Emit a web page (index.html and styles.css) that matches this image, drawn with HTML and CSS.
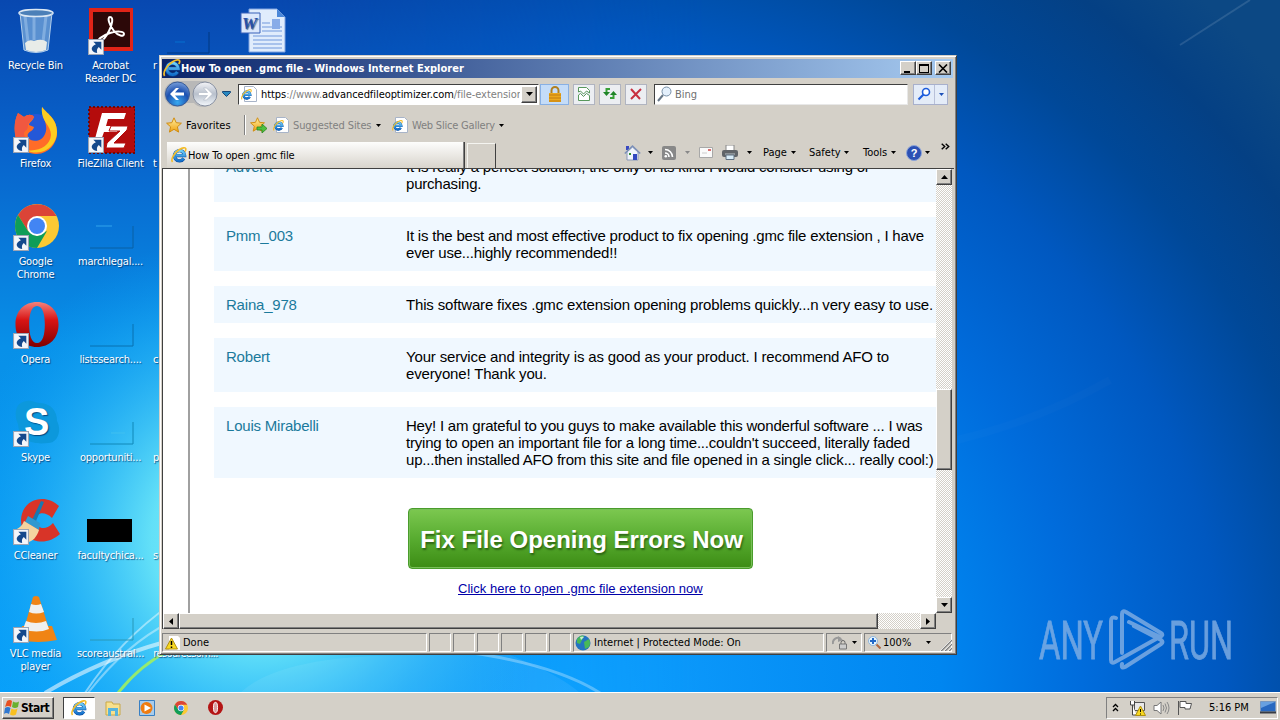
FILE: index.html
```html
<!DOCTYPE html>
<html lang="en">
<head>
  <meta charset="UTF-8">
  <meta name="viewport" content="width=device-width, initial-scale=1.0">
  <title>How To open .gmc file</title>
  <link rel="stylesheet" href="styles.css">
</head>
<body>

  <!-- shared icons -->
  <svg class="defs" width="0" height="0">
    <defs>
      <linearGradient id="ieBlue" x1="0" y1="0" x2="0" y2="1">
        <stop offset="0" stop-color="#70d0f8"/><stop offset="1" stop-color="#1470cc"/>
      </linearGradient>
      <linearGradient id="gold" x1="0" y1="0" x2="0" y2="1">
        <stop offset="0" stop-color="#fff0a0"/><stop offset="1" stop-color="#f0a010"/>
      </linearGradient>
      <linearGradient id="operaRed" x1="0" y1="0" x2="0" y2="1">
        <stop offset="0" stop-color="#f4827c"/><stop offset=".4" stop-color="#d81414"/><stop offset="1" stop-color="#800000"/>
      </linearGradient>
      <radialGradient id="navBlue" cx=".5" cy=".85" r=".8">
        <stop offset="0" stop-color="#38a8f0"/><stop offset=".6" stop-color="#1c50b0"/><stop offset="1" stop-color="#6c94d4"/>
      </radialGradient>
      <linearGradient id="navGray" x1="0" y1="0" x2="0" y2="1">
        <stop offset="0" stop-color="#f4f4f8"/><stop offset=".5" stop-color="#b8c0cc"/><stop offset="1" stop-color="#f4f8fc"/>
      </linearGradient>
    </defs>
    <symbol id="ie" viewBox="0 0 16 16">
      <path d="M12.800 11.500A5.100 5.100 0 1 1 13.600 8.600H5" fill="none" stroke="#0c4c9c" stroke-width="3.400"/>
      <path d="M12.800 11.500A5.100 5.100 0 1 1 13.600 8.600H5" fill="none" stroke="url(#ieBlue)" stroke-width="2.500"/>
      <path d="M1.500 15C-.5 12.500 3 5.800 8.500 2.500c3-1.800 6-2.300 6.300-.8.2 1-.3 2-.8 2.800" fill="none" stroke="#f4bc28" stroke-width="1.600"/>
    </symbol>
    <symbol id="iepage" viewBox="0 0 16 16">
      <path d="M3.500.5h9l3 3v12h-12z" fill="#fff" stroke="#a8b4c8"/>
      <use href="#ie" x="0" y="3" width="11" height="11"/>
    </symbol>
    <symbol id="star" viewBox="0 0 16 16">
      <path d="M8 .8l2.200 4.900 5.200.5-4 3.600 1.200 5.300L8 12.300l-4.600 2.800 1.200-5.300-4-3.600 5.200-.5z" fill="url(#gold)" stroke="#d08c10"/>
    </symbol>
    <symbol id="shortcut" viewBox="0 0 15 15">
      <path d="M.5.500h14v14H.5z" fill="#f4f6fa" stroke="#9ca4b4"/>
      <path d="M5 2.500h7.500V10l-2.400-2.400C8.500 9 8 10.500 8.600 13.200 2 12 2 7 7.400 4.900z" fill="#14488c"/>
    </symbol>
    <symbol id="chrome" viewBox="0 0 44 44">
      <circle cx="22" cy="22" r="22" fill="#fcc934"/>
      <path d="M3 11A22 22 0 0 1 41.500 12H22L13 27z" fill="#db4437"/>
      <path d="M3 11A22 22 0 0 0 22 44l10-17-10 5-9-5z" fill="#0f9d58"/>
      <circle cx="22" cy="22" r="10" fill="#fff"/><circle cx="22" cy="22" r="8" fill="#4285f4"/>
    </symbol>
    <symbol id="opera" viewBox="0 0 44 46">
      <path fill-rule="evenodd" d="M22 0C9 0 0 9 0 23s9 23 22 23 22-9 22-23S35 0 22 0zm0 4c6 0 8 9 8 19s-2 19-8 19-8-9-8-19 2-19 8-19z" fill="url(#operaRed)"/>
    </symbol>
    <symbol id="arrow" viewBox="0 0 5 3"><path d="M0 0h5L2.500 3z"/></symbol>
  </svg>

  <div class="desktop">
    <svg class="wallpaper" viewBox="0 0 1280 693" preserveAspectRatio="none">
      <defs>
        <linearGradient id="base" x1="0" y1="0" x2="0" y2="1">
          <stop offset="0" stop-color="#0848b0"/><stop offset=".22" stop-color="#0864cc"/><stop offset=".5" stop-color="#0890e8"/><stop offset="1" stop-color="#08a0fa"/>
        </linearGradient>
        <radialGradient id="glow" gradientUnits="userSpaceOnUse" cx="260" cy="540" r="310">
          <stop offset="0" stop-color="#98f8f8"/><stop offset=".35" stop-color="#68e4f8" stop-opacity=".95"/><stop offset=".68" stop-color="#30bcf8" stop-opacity=".55"/><stop offset="1" stop-color="#08a0f8" stop-opacity="0"/>
        </radialGradient>
        <radialGradient id="right" gradientUnits="userSpaceOnUse" cx="560" cy="700" r="950">
          <stop offset="0" stop-color="#10a0ff"/><stop offset=".4" stop-color="#0086f0"/><stop offset=".55" stop-color="#006cdc"/><stop offset=".7" stop-color="#0058c0"/><stop offset=".82" stop-color="#004898"/><stop offset=".92" stop-color="#044084"/><stop offset="1" stop-color="#0c4884"/>
        </radialGradient>
        <linearGradient id="fade" x1="0" y1="0" x2="1" y2="0">
          <stop offset=".2" stop-color="#000"/><stop offset=".55" stop-color="#fff"/>
        </linearGradient>
        <mask id="m"><rect width="1280" height="693" fill="url(#fade)"/></mask>
      </defs>
      <rect width="1280" height="693" fill="url(#base)"/>
      <rect width="1280" height="693" fill="url(#right)" mask="url(#m)"/>
      <rect width="1280" height="693" fill="url(#glow)"/>
      <g fill="none" stroke="#fff">
        <path d="M45 693Q100 660 165 642" stroke-width="4" opacity=".55"/>
        <path d="M85 693Q120 640 170 605" stroke-width="2" opacity=".45"/>
        <path d="M88 693Q125 645 170 622" stroke-width="2" opacity=".4"/>
        <path d="M118 693Q140 665 170 650" stroke="#a0f060" stroke-width="3" opacity=".9"/>
        <path d="M400 645Q540 655 600 693" stroke-width="3" opacity=".3"/>
        <path d="M1180 45L1250 0" stroke-width="2" opacity=".12"/>
        <path d="M957 440Q1040 420 1110 380" stroke-width="8" opacity=".015"/>
      </g>
      <path d="M240 693q40-38 170-38h100q50 20 70 38z" fill="#fff" opacity=".07"/>
    </svg>

    <div class="icons">
      <div class="icon"><svg viewBox="0 0 48 48">
        <path d="M8 4l4 38q12 5 24 0l4-38z" fill="#7cacdc" opacity=".7"/>
        <path d="M13 8l3 26M34 8l-3 26M22 8v24" stroke="#c8e4fc" stroke-width="3" opacity=".35"/>
        <path d="M13 35q4-4 9-2 8-3 13 1l-1 8q-10 4-20 0z" fill="#e8ece8"/>
        <ellipse cx="24" cy="5" rx="17" ry="3.500" fill="#4c80b8" stroke="#dce8f4" stroke-width="1.500"/>
        <path d="M8 5l4 37q12 5 24 0l4-37" fill="none" stroke="#b4d0ec"/>
      </svg><span>Recycle Bin</span></div>
      <div class="icon"><svg viewBox="0 0 48 48">
        <path d="M2 0h44v43H2z" fill="#e02418"/><path d="M6 4h37v35H6z" fill="#2c0808"/>
        <path d="M23 9c4 0 2 8-1 14s-6 10-9 10c-4 0 1-5 10-8 7-2 14-2 14 1s-6 2-10-3c-5-6-7-14-4-14z" fill="none" stroke="#fff" stroke-width="2"/>
        <use href="#shortcut" x="1" y="31" width="16" height="16"/>
      </svg><span>Acrobat<br>Reader DC</span></div>
      <div class="icon edge"><svg viewBox="0 0 48 48"><path d="M4 45h42V24" fill="none" stroke="#003880"/><path d="M12 34h10" stroke="#0470d0"/></svg><span>r</span></div>
      <div class="icon word"><svg viewBox="0 0 48 48">
        <path d="M11 1h28l8 8v35H11z" fill="#e0ecfc" stroke="#80a4e0"/><path d="M39 1v8h8z" fill="#4c88d8"/>
        <path d="M24 19h20M24 23h20M15 28h29M15 32h29M15 36h29M15 40h29M24 15h8" stroke="#7098dc"/>
        <path d="M34 11h8v10h-8z" fill="#88ace8"/>
        <path d="M3 5h19v20H3z" fill="#dce8fc" stroke="#3860b8"/>
        <text x="4" y="21" class="word-w">W</text>
      </svg></div>

      <div class="icon"><svg viewBox="0 0 48 48">
        <circle cx="24" cy="23" r="15" fill="#2458d8"/>
        <path d="M30 1c4 6 15 11 15 25a21 21 0 0 1-42 2C2 20 3 13 6 7l6 4c4-3 8-3 10 0-1 4-5 5-5 8l5 2c-1 5-8 5-6 10 3 6 14 5 17-3 4-9-3-16-3-27z" fill="#ff6c28"/>
        <path d="M30 1c4 6 15 11 15 25a21 21 0 0 1-31 18c13 2 24-4 25-15 0-10-11-14-9-28z" fill="#fccc20"/>
        <path d="M3 28C2 20 3 13 6 7l6 4c4-3 8-3 10 0-2 3-5 4-6 8 0 8-6 4-3 12l-2 9q-7-4-8-12z" fill="#f05840"/>
        <use href="#shortcut" x="1" y="31" width="16" height="16"/>
      </svg><span>Firefox</span></div>
      <div class="icon"><svg viewBox="0 0 48 48">
        <path d="M2 1h46v46H2z" fill="#b40c0c" stroke="#700808" stroke-width="2" stroke-dasharray="2 2"/>
        <path d="M15 7h24l-2 6H21l-2 7h13l-2 6H17l-5 14H6z" fill="#fff"/>
        <path d="M24 20h17l-1 4-13 13h12l-2 5H19l1-5 13-12H22z" fill="#fff" stroke="#b40c0c"/>
        <use href="#shortcut" x="1" y="31" width="16" height="16"/>
      </svg><span>FileZilla Client</span></div>
      <div class="icon edge"><span class="low">t</span></div>
      <div></div>

      <div class="icon"><svg viewBox="0 0 48 48"><use href="#chrome" x="3" y="0" width="44" height="44"/><use href="#shortcut" x="1" y="31" width="16" height="16"/></svg><span>Google<br>Chrome</span></div>
      <div class="icon"><svg viewBox="0 0 48 48"><path d="M3 44h43V22" fill="none" stroke="#0860a4"/><path d="M9 22h16" stroke="#30a4ec"/></svg><span>marchlegal....</span></div>
      <div></div><div></div>

      <div class="icon"><svg viewBox="0 0 48 48"><use href="#opera" x="3" y="0" width="44" height="45"/><use href="#shortcut" x="1" y="31" width="16" height="16"/></svg><span>Opera</span></div>
      <div class="icon"><svg viewBox="0 0 48 48"><path d="M3 44h43V22" fill="none" stroke="#0870b0"/></svg><span>listssearch....</span></div>
      <div class="icon edge"><span class="low">c</span></div><div></div>

      <div class="icon"><svg viewBox="0 0 48 48">
        <path d="M15 1c5-1 8 2 12 2 12 0 18 8 18 18 5 9 1 22-9 22-16 2-29-3-30-19C2 16 2 2 15 1z" fill="#0c98dc"/>
        <text x="12" y="35" class="skype-s">S</text>
        <use href="#shortcut" x="1" y="31" width="16" height="16"/>
      </svg><span>Skype</span></div>
      <div class="icon"><svg viewBox="0 0 48 48"><path d="M3 44h43V22" fill="none" stroke="#1088b8"/><path d="M24 33h14" stroke="#40c0f0"/></svg><span>opportuniti...</span></div>
      <div class="icon edge"><span class="low">p</span></div><div></div>

      <div class="icon"><svg viewBox="0 0 48 48">
        <path d="M47 8C34-5 10 0 9 22c0 22 24 28 39 14l-7-11c-7 8-17 6-17-3 0-8 9-9 16-2z" fill="#d83428"/>
        <path d="M29 3l3 1-8 19-4-1z" fill="#1878b0"/>
        <path d="M16 18l12 7-1 7-14-8z" fill="#3098d0"/>
        <path d="M12 23l15 9c-2 7-7 12-11 12L1 32c6-1 9-4 11-9z" fill="#f4d4a0"/>
        <use href="#shortcut" x="1" y="31" width="16" height="16"/>
      </svg><span>CCleaner</span></div>
      <div class="icon"><svg viewBox="0 0 48 48"><path d="M0 21h45v23H0z"/></svg><span>facultychica...</span></div>
      <div class="icon edge"><span class="low">s</span></div><div></div>

      <div class="icon"><svg viewBox="0 0 48 48">
        <path d="M10 30h30l5 14q-20 4-36 0z" fill="#f08414"/>
        <path d="M21 1q3-2 6 0l10 32q-12 5-25 0z" fill="#f08414"/>
        <path d="M19 8q5 2 10 0l3 8q-8 3-15 0zM14 25q10 4 20 0l3 8q-12 5-26 0z" fill="#f0f0ee"/>
        <use href="#shortcut" x="1" y="31" width="16" height="16"/>
      </svg><span>VLC media<br>player</span></div>
      <div class="icon"><svg viewBox="0 0 48 48"><path d="M3 44h43V22" fill="none" stroke="#2898b8"/></svg><span>scoreaustral...</span></div>
      <div class="icon"><span class="low tight">resourcesom...</span></div><div></div>
    </div>

    <div class="window">
      <div class="titlebar">
        <svg class="i18"><use href="#ie"/></svg>
        <span class="title">How To open .gmc file - Windows Internet Explorer</span>
        <span class="winbtn"><svg viewBox="0 0 10 9"><path d="M1 7h6v2H1z"/></svg></span>
        <span class="winbtn"><svg viewBox="0 0 10 9"><path fill-rule="evenodd" d="M0 0h10v9H0zM1 2h8v6H1z"/></svg></span>
        <span class="winbtn close"><svg viewBox="0 0 10 9"><path d="M1 .5l8 8M9 .5l-8 8" stroke="#000" stroke-width="1.600"/></svg></span>
      </div>

      <div class="navbar">
        <svg class="nav" viewBox="0 0 54 28">
          <path d="M13 1h26a13 13 0 0 1 0 26q-6 0-9-4h-8q-3 4-9 4a13 13 0 0 1 0-26z" fill="#b8b8b8"/>
          <circle cx="13.500" cy="14" r="12" fill="url(#navBlue)" stroke="#385c98"/>
          <path d="M6 14l6-6h3l-4 4.500h9v3h-9l4 4.500h-3z" fill="#fff"/>
          <circle cx="41" cy="14" r="12" fill="url(#navGray)" stroke="#8890a0"/>
          <path d="M48.500 14l-6-6h-3l4 4.500h-9v3h9l-4 4.500h3z" fill="#fff" stroke="#b4bcc8" stroke-width=".7"/>
        </svg>
        <svg class="navdrop" viewBox="0 0 9 6"><path d="M.5.500h8v1L4.500 5.500.5 1.500z" fill="#2888c0" stroke="#184878"/></svg>
        <div class="address">
          <svg class="i16"><use href="#iepage"/></svg>
          <span class="url"><b>https</b>://www.<b>advancedfileoptimizer.com</b>/file-extension</span>
          <span class="combo"><svg viewBox="0 0 7 4"><path d="M0 0h7L3.500 4z"/></svg></span>
        </div>
        <span class="tool lock"><svg viewBox="0 0 16 16" width="16" height="16"><path d="M4.500 8V4.500a3.500 3.500 0 0 1 7 0V8" fill="none" stroke="#b08020" stroke-width="2"/><path d="M2 7h12v9H2z" fill="#eca81c"/><path d="M2 9h12M2 12h12M2 15h12" stroke="#c07c10"/></svg></span>
        <span class="tool"><svg viewBox="0 0 14 16" width="14" height="16"><path d="M1.500 6V1.500h8l3 3V7l-3-2-3 3-3-3zM1.500 9l2-1.500 3 3 3-3 3 2v5h-11z" fill="#fff" stroke="#58985c"/></svg></span>
        <span class="tool"><svg viewBox="0 0 16 16" width="16" height="16"><path d="M8 3H4.500v4M8 12h3.500V8" fill="none" stroke="#38a038" stroke-width="2"/><path d="M1 6h7l-3.500 4zM8 9h7l-3.500-4z" fill="#208428"/></svg></span>
        <span class="tool"><svg viewBox="0 0 12 12" width="12" height="12"><path d="M1 1l9 10M11 1L1 11" stroke="#c83040" stroke-width="2"/></svg></span>
        <div class="search">
          <svg width="16" height="16" viewBox="0 0 16 16"><circle cx="9.500" cy="5.500" r="4.500" fill="#e4f0fc" stroke="#7890a8"/><path d="M6 9l-5 6" stroke="#687888" stroke-width="2"/></svg>
          <span>Bing</span>
        </div>
        <span class="go"><span><svg width="14" height="14" viewBox="0 0 14 14"><circle cx="9" cy="5" r="3.500" fill="#fff" stroke="#1c5cdc" stroke-width="1.600"/><path d="M6.500 7.500l-5 5" stroke="#1c5cdc" stroke-width="2.200"/></svg></span><span><svg class="dd blue"><use href="#arrow"/></svg></span></span>
      </div>

      <div class="favbar">
        <svg class="i16"><use href="#star"/></svg>
        <span class="fav">Favorites</span>
        <i class="sep"></i>
        <svg class="i17" viewBox="0 0 17 16"><use href="#star" width="15" height="15"/><path d="M7 10h5V7l5 4.500-5 4.500v-3H7z" fill="#50c040" stroke="#288820" stroke-width=".8"/></svg>
        <svg class="i16 f1"><use href="#iepage"/></svg>
        <span class="gray s1">Suggested Sites</span><svg class="dd"><use href="#arrow"/></svg>
        <svg class="i16 f2"><use href="#iepage"/></svg>
        <span class="gray s2">Web Slice Gallery</span><svg class="dd"><use href="#arrow"/></svg>
      </div>

      <div class="tabbar">
        <div class="tab"><svg class="i16"><use href="#ie"/></svg><span>How To open .gmc file</span></div>
        <div class="newtab"></div>
        <div class="commands">
          <svg class="home" width="17" height="17" viewBox="0 0 17 17"><path d="M2 2h3v4H2z" fill="#3848c0"/><path d="M3 8l5.500-5L14 8v8H3z" fill="#f0f4fc" stroke="#8898b8"/><path d="M.8 9.500L8.500 2l7.700 7.500" fill="none" stroke="#7c90b8" stroke-width="1.600"/><path d="M9 10h4v6H9z" fill="#3048c0"/><path d="M5 9h2v2H5z" fill="#309030"/></svg>
          <svg class="dd c1"><use href="#arrow"/></svg>
          <svg class="rss" width="14" height="14" viewBox="0 0 14 14"><rect width="14" height="14" rx="2" fill="#888"/><path d="M3 7a4 4 0 0 1 4 4M3 3.500A7.500 7.500 0 0 1 10.500 11" fill="none" stroke="#fff" stroke-width="1.600"/><circle cx="3.800" cy="10.300" r="1.300" fill="#fff"/></svg>
          <svg class="dd c2"><use href="#arrow"/></svg>
          <svg class="mail" width="14" height="11" viewBox="0 0 14 11"><path d="M.5.500h13v10H.5z" fill="#fafafa" stroke="#a8a8a8"/><path d="M9 2h3v2H9z" fill="#d87070"/><path d="M3 6h5" stroke="#ccc"/></svg>
          <svg class="print" width="16" height="15" viewBox="0 0 16 15"><path d="M4 0h8v6H4z" fill="#fff" stroke="#888"/><rect y="5" width="16" height="7" rx="2" fill="#606468"/><path d="M3 9h10" stroke="#b8c0c4"/><path d="M4 10h8v4.500H4z" fill="#d8ecf8" stroke="#607080"/></svg>
          <svg class="dd c3"><use href="#arrow"/></svg>
          <span class="page">Page</span><svg class="dd"><use href="#arrow"/></svg>
          <span class="safety">Safety</span><svg class="dd"><use href="#arrow"/></svg>
          <span class="tools">Tools</span><svg class="dd"><use href="#arrow"/></svg>
          <svg class="help" width="16" height="16" viewBox="0 0 16 16"><circle cx="8" cy="8" r="7.500" fill="#2c50b4" stroke="#8ca4d8"/><text x="4.800" y="12" class="q">?</text></svg><svg class="dd c4"><use href="#arrow"/></svg>
          <svg class="more" width="9" height="7" viewBox="0 0 9 7"><path d="M.7.800l3 2.700-3 2.700M4.700.800l3 2.700-3 2.700" fill="none" stroke="#000" stroke-width="1.400"/></svg>
        </div>
      </div>

      <div class="view">
        <div class="content">
          <div class="page-col">
            <div class="review"><span class="name">Advera</span><p>It is really a perfect solution, the only of its kind I would consider using or<br>purchasing.</p></div>
            <div class="review"><span class="name">Pmm_003</span><p>It is the best and most effective product to fix opening .gmc file extension , I have<br>ever use...highly recommended!!</p></div>
            <div class="review"><span class="name">Raina_978</span><p class="wide">This software fixes .gmc extension opening problems quickly...n very easy to use.</p></div>
            <div class="review"><span class="name">Robert</span><p class="wide">Your service and integrity is as good as your product. I recommend AFO to<br>everyone! Thank you.</p></div>
            <div class="review"><span class="name">Louis Mirabelli</span><p>Hey! I am grateful to you guys to make available this wonderful software ... I was<br>trying to open an important file for a long time...couldn't succeed, literally faded<br>up...then installed AFO from this site and file opened in a single click... really cool:)</p></div>
            <div class="fix"><span>Fix File Opening Errors Now</span></div>
            <a class="link" href="#">Click here to open .gmc file extension now</a>
          </div>
        </div>
        <div class="vscroll">
          <span class="sb"><svg viewBox="0 0 7 4" width="7" height="4"><path d="M0 4h7L3.500 0z"/></svg></span>
          <span class="vthumb"></span>
          <span class="sb end"><svg viewBox="0 0 7 4" width="7" height="4"><path d="M0 0h7L3.500 4z"/></svg></span>
        </div>
        <div class="hscroll">
          <span class="sb"><svg viewBox="0 0 4 7" width="4" height="7"><path d="M4 0v7L0 3.500z"/></svg></span>
          <span class="hthumb"></span>
          <span class="sb end"><svg viewBox="0 0 4 7" width="4" height="7"><path d="M0 0v7l4-3.500z"/></svg></span>
        </div>
        <div class="corner"></div>
      </div>

      <div class="status">
        <div class="pane done"><svg width="16" height="16" viewBox="0 0 16 16"><path d="M4 1h9l2 2v12H4z" fill="#fff"/><path d="M6.500 3l6 11H.5z" fill="#f8d820" stroke="#b09010"/><path d="M6.500 6v4M6.500 11.500v1.500" stroke="#000" stroke-width="1.500"/></svg><span>Done</span></div>
        <div class="pane small"></div><div class="pane small"></div><div class="pane small"></div><div class="pane small"></div><div class="pane small"></div><div class="pane small"></div>
        <div class="pane zone"><svg width="16" height="16" viewBox="0 0 16 16"><circle cx="8" cy="8" r="7.500" fill="#2474c0"/><path d="M2 4q4-5 7-3l-2 4-2 4-3-1zM9 7l5-3q2 4 0 8l-4 2z" fill="#48b858"/><path d="M5 2q3-1 4 0L6 5z" fill="#c8f0d0"/></svg><span>Internet | Protected Mode: On</span></div>
        <div class="pane filter"><svg width="16" height="14" viewBox="0 0 16 14"><path d="M1 8a5 5 0 0 1 8-5" fill="none" stroke="#999" stroke-width="2"/><path d="M6 0l5 4-5 2z" fill="#999"/><path d="M9 8V6.500a2 2 0 0 1 4 0V8" fill="none" stroke="#666"/><path d="M7.500 8h7v5h-7z" fill="#ccc" stroke="#777"/></svg><svg class="dd"><use href="#arrow"/></svg></div>
        <div class="pane zoom"><svg width="13" height="13" viewBox="0 0 13 13"><circle cx="5" cy="5" r="4.500" fill="#e4f4ff" stroke="#90b4d8"/><path d="M5 2v6M2 5h6" stroke="#2068c8" stroke-width="2"/><path d="M8.500 8.500l4 4" stroke="#b06840" stroke-width="2"/></svg><span>100%</span><svg class="dd"><use href="#arrow"/></svg></div>
        <svg class="grip" width="12" height="12" viewBox="0 0 12 12"><path d="M1 12L12 1M5 12l7-7M9 12l3-3" stroke="#808080" stroke-width="1.500"/><path d="M0 12L12 0M4 12l8-8M8 12l4-4" stroke="#fff" stroke-width=".7"/></svg>
      </div>
    </div>

    <svg class="brand" viewBox="0 0 196 64">
      <g class="brand-text"><text x="1" y="51" textLength="64" lengthAdjust="spacingAndGlyphs">ANY</text><text x="131" y="51" textLength="64" lengthAdjust="spacingAndGlyphs">RUN</text></g>
      <g fill="none" stroke-width="4" stroke-linejoin="round" stroke-linecap="round" class="brand-mark">
        <path d="M78 10q-5-2-5 3v39q0 4 4 2l41-23"/>
        <path d="M84 45V6q0-4 4-2l35 21q3 2-1 4L91 14"/>
        <path d="M96 18l27 14q3 2 0 4L87 59q-4 2-3-3"/>
      </g>
    </svg>
  </div>

  <div class="taskbar">
    <div class="start"><svg width="17" height="17" viewBox="0 0 17 17"><path d="M3 2q3-2 5 0L7 8Q4 6 1 8z" fill="#e85020"/><path d="M9 2.500q3 2 6 0l-1 5.500q-3 2-6 0z" fill="#68b030"/><path d="M1 9q3-2 5.500 0L5 15q-3-2-5 0z" fill="#3078d0"/><path d="M7.500 9.500q3 2 6 0L12 15.500q-3 2-6 0z" fill="#f8c020"/></svg><span>Start</span></div>
    <div class="task active"><svg class="i16"><use href="#ie"/></svg></div>
    <div class="task"><svg width="16" height="16" viewBox="0 0 16 16"><path d="M1 2h6l1 2h7v11H1z" fill="#f8e08c" stroke="#c8a848"/><path d="M3 16V8h10v8h-3v-5H6v5z" fill="#58b4dc"/></svg></div>
    <div class="task"><svg width="16" height="16" viewBox="0 0 16 16"><path d="M.5.500h15v15H.5z" fill="#a8ccec" stroke="#3880c4"/><circle cx="7.500" cy="8" r="6" fill="#f07c10"/><path d="M5.500 4.500L12 8l-6.500 3.500z" fill="#fff"/></svg></div>
    <div class="task"><svg width="14" height="14"><use href="#chrome"/></svg></div>
    <div class="task"><svg width="15" height="15" viewBox="0 0 16 16"><circle cx="8" cy="8" r="8" fill="#b41414"/><ellipse cx="8" cy="8" rx="2.200" ry="5.500" fill="#d8a0a0" stroke="#fff"/></svg></div>
    <div class="tray">
      <svg class="t1" width="7" height="9" viewBox="0 0 7 9"><path d="M1 4l2.500-2.500L6 4M1 8l2.500-2.500L6 8" fill="none" stroke="#000" stroke-width="1.300"/></svg>
      <svg class="t2" width="17" height="16" viewBox="0 0 17 16"><path d="M5.500 2.500h10v8h-10z" fill="#e8e8e8" stroke="#555"/><path d="M1.500 1v4h4V1M3.500 5v10h4" fill="#fff" stroke="#444"/><path d="M11.500 6l5 9.500h-10z" fill="#f8d820" stroke="#b09010"/><path d="M11.500 9v3M11.500 13.500v1" stroke="#000"/></svg>
      <svg class="t3" width="17" height="14" viewBox="0 0 17 14"><path d="M1 4.500h3L8 1v12L4 9.500H1z" fill="#fff" stroke="#777"/><path d="M10 4q2 3 0 6M12 2.500q3 4.500 0 9M14 1q4 6 0 12" fill="none" stroke="#888"/></svg>
      <svg class="t4" width="16" height="15" viewBox="0 0 16 15"><path d="M1.500 1v14M3 1.500h6v2h5.500L13 9H8V7.500H3z" fill="#fff" stroke="#555"/></svg>
      <span class="clock">5:16 PM</span>
      <svg class="t5" width="16" height="13" viewBox="0 0 16 13"><path d="M.5.500h15v10H.5z" fill="#2868c0" stroke="#7898c0"/><path d="M1 1h14L1 7z" fill="#68a0e0"/><path d="M0 11.500h16" stroke="#383c44" stroke-width="2"/></svg>
    </div>
  </div>

</body>
</html>
```

FILE: styles.css
```css
* {
  box-sizing: border-box;
}
body {
  margin: 0;
  width: 1280px;
  height: 720px;
  overflow: hidden;
  font-family: "DejaVu Sans Condensed", "DejaVu Sans", Tahoma, sans-serif;
  font-stretch: condensed;
  font-size: 11px;
  color: #000;
}
svg {
  display: block;
  flex: none;
}
span {
  white-space: nowrap;
}
.defs {
  position: absolute;
}
.i16 { width: 16px; height: 16px; }
.i17 { width: 17px; height: 16px; }
.i18 { width: 18px; height: 18px; }
.dd { width: 5px; height: 3px; }
.blue { fill: #1c50b8; }

/* desktop */
.desktop {
  position: relative;
  height: 692px;
  overflow: hidden;
}
.wallpaper {
  position: absolute;
  width: 1280px;
  height: 693px;
}
.icons {
  position: absolute;
  left: -2px;
  top: 8px;
  display: grid;
  grid-template-columns: 75px 75px 75px 75px;
  grid-auto-rows: 98px;
}
.icon {
  display: flex;
  flex-direction: column;
  align-items: center;
  color: #fff;
  text-align: center;
  line-height: 13px;
  text-shadow: 1px 1px 1px rgba(0, 40, 90, 0.7);
}
.icon svg {
  width: 48px;
  height: 48px;
}
.icon span {
  margin-top: 3px;
  letter-spacing: -0.2px;
}
.icon .low {
  margin-top: 51px;
}
.icon .tight {
  letter-spacing: -0.6px;
}
.edge {
  align-items: flex-start;
  padding-left: 5px;
}
.edge svg {
  margin-left: 10px;
}
.word svg {
  margin-left: 2px;
}
.word-w {
  font: italic bold 17px "Liberation Serif", serif;
  fill: #2850a8;
}
.skype-s {
  font: bold 38px "Liberation Sans", sans-serif;
  fill: #fff;
}

/* window */
.window {
  position: absolute;
  left: 159px;
  top: 55px;
  width: 798px;
  height: 600px;
  padding: 2px;
  display: flex;
  flex-direction: column;
  background: #d4d0c8;
  border: 1px solid #d4d0c8;
  border-right-color: #404040;
  border-bottom-color: #404040;
  box-shadow: inset 1px 1px #fff, inset -1px -1px #808080;
}
.titlebar {
  height: 19px;
  display: flex;
  align-items: center;
  margin: 1px 1px 0 0;
  padding: 0 2px 0 1px;
  background: linear-gradient(to right, #0a246a, #a6caf0);
  color: #fff;
}
.title {
  flex: 1;
  font-weight: bold;
}
.winbtn {
  width: 16px;
  height: 14px;
  display: flex;
  align-items: center;
  justify-content: center;
  background: #d4d0c8;
  border: 1px solid;
  border-color: #fff #404040 #404040 #fff;
  box-shadow: inset -1px -1px #808080;
}
.winbtn svg {
  width: 10px;
  height: 9px;
}
.close {
  margin-left: 3px;
}
.navbar {
  height: 33px;
  display: flex;
  align-items: center;
  padding-left: 2px;
}
.nav {
  width: 54px;
  height: 28px;
}
.navdrop {
  width: 9px;
  height: 6px;
  margin: 0 7px 0 4px;
}
.address {
  width: 301px;
  height: 21px;
  display: flex;
  align-items: center;
  padding-left: 2px;
  background: #fff;
  border: 1px solid;
  border-color: #404040 #fff #fff #404040;
}
.url {
  width: 259px;
  margin-left: 4px;
  overflow: hidden;
  color: #808080;
  letter-spacing: -0.07px;
}
.url b {
  font-weight: normal;
  color: #000;
}
.combo {
  width: 16px;
  height: 17px;
  margin-left: 1px;
  display: flex;
  align-items: center;
  justify-content: center;
  background: #d4d0c8;
  border: 1px solid;
  border-color: #fff #404040 #404040 #fff;
  box-shadow: inset -1px -1px #808080;
}
.combo svg {
  width: 7px;
  height: 4px;
}
.tool {
  width: 22px;
  height: 21px;
  margin-left: 4px;
  display: flex;
  align-items: center;
  justify-content: center;
  background: #eceef2;
  border: 1px solid #b0b4c0;
}
.lock {
  width: 29px;
  margin-left: 1px;
  background: #c4dcf8;
  border-color: #88b0e4;
}
.search {
  width: 254px;
  height: 21px;
  margin-left: 7px;
  display: flex;
  align-items: center;
  gap: 2px;
  padding-left: 2px;
  background: #fff;
  border: 1px solid;
  border-color: #404040 #e8e8e8 #e8e8e8 #404040;
  color: #707070;
}
.go {
  display: flex;
  margin-left: 5px;
  height: 21px;
  background: #e4ecf8;
  border: 1px solid #a8b0cc;
}
.go span {
  width: 20px;
  display: flex;
  align-items: center;
  justify-content: center;
}
.go span + span {
  width: 13px;
  border-left: 1px solid #b8c0d8;
}
.favbar {
  height: 30px;
  display: flex;
  align-items: center;
  padding-left: 4px;
}
.fav {
  width: 58px;
  margin-left: 4px;
}
.sep {
  width: 2px;
  height: 20px;
  margin: 0 4px 0 0;
  border-left: 1px solid #808080;
  border-right: 1px solid #fff;
}
.f1 { margin-left: 6px; }
.f2 { margin-left: 11px; }
.gray {
  margin-left: 4px;
  color: #808080;
  letter-spacing: -0.2px;
}
.s1 {
  width: 83px;
  letter-spacing: -0.1px;
}
.s2 { width: 87px; }
.tabbar {
  height: 28px;
  display: flex;
  align-items: flex-end;
  padding-left: 5px;
}
.tab {
  width: 298px;
  height: 26px;
  display: flex;
  align-items: center;
  gap: 1px;
  padding-left: 4px;
  background: linear-gradient(to bottom, #fdfdfc, #d8d4cc);
  border-right: 1px solid #404040;
  box-shadow: inset -1px 0 #808080;
}
.tab span {
  letter-spacing: -0.1px;
}
.newtab {
  width: 29px;
  height: 25px;
  margin-left: 2px;
  border: 1px solid #f4f4f0;
  border-right-color: #404040;
  border-bottom: 0;
}
.commands {
  flex: 1;
  height: 29px;
  margin-bottom: 1px;
  display: flex;
  align-items: center;
}
.home { margin-left: 128px; }
.c1 { margin-left: 7px; }
.rss { margin-left: 9px; }
.c2 { margin-left: 9px; fill: #888; }
.mail { margin-left: 9px; }
.print { margin-left: 9px; }
.c3 { margin-left: 9px; }
.page { width: 28px; margin-left: 11px; }
.safety { width: 35px; margin-left: 13px; }
.tools { width: 28px; margin-left: 14px; }
.help { margin-left: 10px; }
.c4 { margin-left: 3px; }
.more { margin: -13px 0 0 11px; }
.q {
  font: bold 11px "Liberation Sans", sans-serif;
  fill: #fff;
}

/* web page */
.view {
  height: 461px;
  display: grid;
  grid-template-columns: 773px 16px;
  grid-template-rows: 444px 16px;
  border-top: 1px solid #404040;
  border-left: 1px solid #404040;
}
.content {
  overflow: hidden;
  padding-left: 25px;
  background: #fff;
}
.page-col {
  display: flex;
  flex-direction: column;
  height: 500px;
  margin-top: -21px;
  padding-left: 24px;
  border-left: 2px solid #a0a0a0;
  font: 15px/17px "Liberation Sans", Arial, sans-serif;
  letter-spacing: -0.21px;
  white-space: nowrap;
}
.review {
  display: flex;
  flex: none;
  margin-bottom: 15px;
  padding: 10px 0 10px 12px;
  background: #f0f8ff;
}
.name {
  flex: none;
  width: 180px;
  color: #1b7a9c;
}
.review p {
  margin: 0;
}
.review .wide {
  letter-spacing: -0.16px;
}
.fix {
  width: 345px;
  height: 61px;
  margin: 15px 0 0 194px;
  padding: 2px 0 0 2px;
  flex: none;
  display: flex;
  align-items: center;
  justify-content: center;
  border: 1px solid #4a9c2c;
  border-radius: 4px;
  box-shadow: inset 0 0 0 1px #78c058;
  background: linear-gradient(to bottom, #7cc850, #58ac30 50%, #3c8c14);
  color: #fff;
  font-size: 24px;
  font-weight: bold;
  letter-spacing: 0;
  text-shadow: 1px 2px 2px #2c6414;
}
.link {
  align-self: flex-start;
  margin: 11px 0 0 244px;
  font-size: 13px;
  letter-spacing: 0.03px;
  color: #0000a8;
}
.vscroll,
.hscroll {
  display: flex;
  background: repeating-conic-gradient(#fff 0 25%, #d4d0c8 0 50%) 0 0 / 2px 2px;
}
.vscroll {
  flex-direction: column;
}
.sb,
.vthumb,
.hthumb {
  background: #d4d0c8;
  border: 1px solid;
  border-color: #fff #404040 #404040 #fff;
  box-shadow: inset -1px -1px #808080;
}
.sb {
  width: 16px;
  height: 16px;
  display: flex;
  align-items: center;
  justify-content: center;
}
.vthumb {
  height: 81px;
  margin-top: 204px;
}
.hthumb {
  width: 699px;
}
.vscroll .end {
  margin-top: auto;
}
.hscroll .end {
  margin-left: auto;
}

/* status bar */
.status {
  height: 19px;
  margin-top: 4px;
  display: flex;
  gap: 2px;
}
.pane {
  display: flex;
  align-items: center;
  border: 1px solid;
  border-color: #808080 #fff #fff #808080;
}
.done { width: 265px; padding-left: 2px; gap: 2px; }
.small { width: 22px; }
.zone { width: 251px; padding-left: 1px; gap: 3px; }
.filter { width: 36px; padding-left: 5px; gap: 4px; }
.zoom { flex: 1; padding-left: 3px; gap: 2px; }
.zoom span { width: 41px; }
.grip { margin: 6px 2px 0 -14px; }

/* watermark */
.brand {
  position: absolute;
  left: 1038px;
  top: 608px;
  width: 196px;
  height: 64px;
}
.brand-text {
  font: 53px Roboto, sans-serif;
  fill: #84b0e4;
  stroke: #84b0e4;
  stroke-width: 0.8px;
  opacity: 0.8;
}
.brand-mark {
  stroke: #84b0e4;
  opacity: 0.8;
}

/* taskbar */
.taskbar {
  height: 28px;
  display: flex;
  align-items: center;
  padding: 2px 2px 0;
  background: #d4d0c8;
  border-top: 1px solid #fff;
}
.start {
  width: 52px;
  height: 22px;
  display: flex;
  align-items: center;
  padding-left: 1px;
  border: 1px solid;
  border-color: #fff #404040 #404040 #fff;
  box-shadow: inset -1px -1px #808080;
  font-size: 12px;
  font-weight: bold;
  letter-spacing: -0.5px;
}
.task {
  width: 32px;
  height: 22px;
  margin-left: 2px;
  display: flex;
  align-items: center;
  justify-content: center;
}
.active {
  margin-left: 9px;
  background: #fff;
  border: 1px solid;
  border-color: #404040 #fff #fff #404040;
}
.tray {
  width: 172px;
  height: 22px;
  margin-left: auto;
  display: flex;
  align-items: center;
  border: 1px solid;
  border-color: #808080 #fff #fff #808080;
}
.t1 { margin-left: 5px; }
.t2 { margin-left: 10px; }
.t3 { margin-left: 7px; }
.t4 { margin-left: 7px; }
.clock { width: 41px; margin-left: 16px; }
.t5 { margin-left: 10px; }
```
